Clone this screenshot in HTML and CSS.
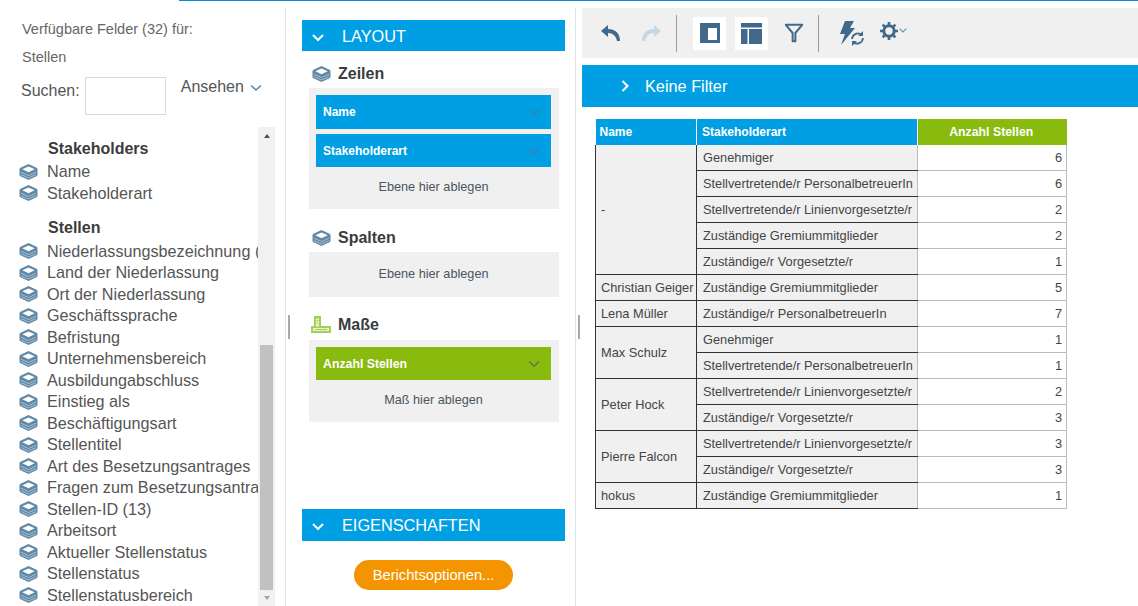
FILE: index.html
```html
<!DOCTYPE html>
<html lang="de">
<head>
<meta charset="utf-8">
<title>Bericht</title>
<link rel="stylesheet" href="styles.css">
</head>
<body>
<svg class="defs" width="0" height="0" aria-hidden="true">
  <symbol id="cube" viewBox="0 0 18 16">
    <path d="M9 .5 17.500 4.500v7L9 15.500.5 11.500v-7z" fill="#6088a7" stroke="#6088a7" stroke-linejoin="round"/>
    <path d="M9 2.400 15.200 5.300 9 8.200 2.800 5.300z" fill="#fff"/>
    <path d="M1.500 8.200 9 11.600l7.500-3.400M1.500 10.600 9 14l7.500-3.400" fill="none" stroke="#b9ccda" stroke-width=".8"/>
  </symbol>
</svg>
<div class="app">
  <aside class="fields">
    <div class="fields-head">
      <p class="caption">Verfügbare Felder (32) für:</p>
      <p class="caption second">Stellen</p>
      <div class="search">
        <label class="search-label" for="q">Suchen:</label>
        <input id="q" class="search-input" type="text">
        <span class="view">Ansehen
          <svg class="view-chev" viewBox="0 0 12 8" width="12" height="8"><path d="M1 1.500 6 6l5-4.500" fill="none" stroke="#5f88a8" stroke-width="1.600"/></svg>
        </span>
      </div>
    </div>
    <div class="tree-wrap">
      <div class="tree">
        <h3 class="group">Stakeholders</h3>
        <ul class="list list-first">
          <li><svg class="cube"><use href="#cube"/></svg>Name</li>
          <li><svg class="cube"><use href="#cube"/></svg>Stakeholderart</li>
        </ul>
        <h3 class="group second-group">Stellen</h3>
        <ul class="list list-second">
          <li><svg class="cube"><use href="#cube"/></svg>Niederlassungsbezeichnung (</li>
          <li><svg class="cube"><use href="#cube"/></svg>Land der Niederlassung</li>
          <li><svg class="cube"><use href="#cube"/></svg>Ort der Niederlassung</li>
          <li><svg class="cube"><use href="#cube"/></svg>Geschäftssprache</li>
          <li><svg class="cube"><use href="#cube"/></svg>Befristung</li>
          <li><svg class="cube"><use href="#cube"/></svg>Unternehmensbereich</li>
          <li><svg class="cube"><use href="#cube"/></svg>Ausbildungabschluss</li>
          <li><svg class="cube"><use href="#cube"/></svg>Einstieg als</li>
          <li><svg class="cube"><use href="#cube"/></svg>Beschäftigungsart</li>
          <li><svg class="cube"><use href="#cube"/></svg>Stellentitel</li>
          <li><svg class="cube"><use href="#cube"/></svg>Art des Besetzungsantrages</li>
          <li><svg class="cube"><use href="#cube"/></svg>Fragen zum Besetzungsantrag</li>
          <li><svg class="cube"><use href="#cube"/></svg>Stellen-ID (13)</li>
          <li><svg class="cube"><use href="#cube"/></svg>Arbeitsort</li>
          <li><svg class="cube"><use href="#cube"/></svg>Aktueller Stellenstatus</li>
          <li><svg class="cube"><use href="#cube"/></svg>Stellenstatus</li>
          <li><svg class="cube"><use href="#cube"/></svg>Stellenstatusbereich</li>
        </ul>
      </div>
      <div class="scrollbar">
        <span class="arrow-up"></span>
        <span class="track"><span class="thumb"></span></span>
        <span class="arrow-down"></span>
      </div>
    </div>
  </aside>

  <section class="layout">
    <div class="bar">
      <svg class="bar-chev" viewBox="0 0 14 9" width="14" height="9"><path d="M2 2l5 5 5-5" fill="none" stroke="#fff" stroke-width="2"/></svg>
      <span class="bar-title">LAYOUT</span>
    </div>
    <div class="drop-group">
      <h4 class="drop-title"><svg class="cube"><use href="#cube"/></svg>Zeilen</h4>
      <div class="drop">
        <div class="pill blue pill-first"><span>Name</span><svg class="pill-chev" viewBox="0 0 12 8" width="12" height="8"><path d="M1 1.500 6 6.200l5-4.700" fill="none" stroke="#3f7fa8" stroke-width="1.400"/></svg></div>
        <div class="pill blue"><span>Stakeholderart</span><svg class="pill-chev" viewBox="0 0 12 8" width="12" height="8"><path d="M1 1.500 6 6.200l5-4.700" fill="none" stroke="#3f7fa8" stroke-width="1.400"/></svg></div>
        <div class="hint">Ebene hier ablegen</div>
      </div>
    </div>
    <div class="drop-group columns">
      <h4 class="drop-title"><svg class="cube"><use href="#cube"/></svg>Spalten</h4>
      <div class="drop empty">
        <div class="hint">Ebene hier ablegen</div>
      </div>
    </div>
    <div class="drop-group measures">
      <h4 class="drop-title">
        <svg class="ruler" viewBox="0 0 20 18" width="20" height="18"><path d="M3 0h7v10h10v7H0v-7h3z" fill="#a5cf55"/><path d="M5 2.500h3v8H5zM2 12h16v3H2z" fill="#e6f2cf"/><path d="M5.500 4.500h2M5.500 7h2M4 13.500h12" stroke="#a5cf55" stroke-width="1" fill="none"/></svg>Maße</h4>
      <div class="drop">
        <div class="pill green pill-first"><span>Anzahl Stellen</span><svg class="pill-chev" viewBox="0 0 12 8" width="12" height="8"><path d="M1 1.500 6 6.200l5-4.700" fill="none" stroke="#5c7a55" stroke-width="1.400"/></svg></div>
        <div class="hint">Maß hier ablegen</div>
      </div>
    </div>
    <div class="bar props">
      <svg class="bar-chev" viewBox="0 0 14 9" width="14" height="9"><path d="M2 2l5 5 5-5" fill="none" stroke="#fff" stroke-width="2"/></svg>
      <span>EIGENSCHAFTEN</span>
    </div>
    <div class="btn-row"><button class="btn" type="button">Berichtsoptionen...</button></div>
    <span class="grip grip-left"></span>
  </section>

  <main class="report">
    <span class="grip grip-right"></span>
    <div class="toolbar">
      <svg class="tool undo" viewBox="0 0 24 20" width="24" height="20"><path d="M2 8l7-6v4c7 0 12 4 12 12h-3c-1-5-4-8-9-8v4z" fill="#41698c"/></svg>
      <svg class="tool redo" viewBox="0 0 24 20" width="24" height="20"><path d="M22 8l-7-6v4C8 6 3 10 3 18h3c1-5 4-8 9-8v4z" fill="#c3d8e6"/></svg>
      <span class="sep"></span>
      <span class="tile tile-a"><svg viewBox="0 0 20 20" width="20" height="20"><path fill-rule="evenodd" d="M0 0h20v20H0zM8 5v12h9V5z" fill="#41698c"/></svg></span>
      <span class="tile tile-b"><svg viewBox="0 0 21 21" width="21" height="21"><path d="M0 0h21v4.500H0zM0 6h6.500v15H0zM8 6h13v15H8z" fill="#41698c"/></svg></span>
      <svg class="tool filter" viewBox="0 0 22 22" width="20" height="20"><path d="M2 2h18l-7.500 9v9h-3v-9z" fill="none" stroke="#41698c" stroke-width="2.200" stroke-linejoin="round"/></svg>
      <span class="sep sep-b"></span>
      <svg class="tool flash" viewBox="0 0 28 26" width="28" height="26"><path d="M8 1h9l-4 7h5L4 25l4-11H3z" fill="#41698c"/><path d="M15 19a6 6 0 0 1 10-4M26 18a6 6 0 0 1-10 4" fill="none" stroke="#41698c" stroke-width="1.800"/><path d="M26 11v5h-5zM15 26v-5h5z" fill="#41698c"/></svg>
      <svg class="tool gear" viewBox="0 0 18 18" width="18" height="18"><circle cx="9" cy="9" r="5.200" fill="none" stroke="#41698c" stroke-width="3"/><path d="M9 0v3M9 15v3M0 9h3M15 9h3M2.600 2.600l2.100 2.100M13.300 13.300l2.100 2.100M2.600 15.400l2.100-2.100M13.300 4.700l2.100-2.100" stroke="#41698c" stroke-width="2.600"/></svg>
      <svg class="gear-chev" viewBox="0 0 8 5" width="8" height="5"><path d="M.7.7 4 4 7.300.7" fill="none" stroke="#6f93ad" stroke-width="1.200"/></svg>
    </div>
    <div class="filterbar">
      <svg class="filter-chev" viewBox="0 0 8 14" width="8" height="14"><path d="M1.500 2l5 5-5 5" fill="none" stroke="#fff" stroke-width="2"/></svg>
      <span class="filter-text">Keine Filter</span>
    </div>
    <table class="data">
      <colgroup><col class="c1"><col class="c2"><col class="c3"></colgroup>
      <thead>
        <tr><th>Name</th><th>Stakeholderart</th><th class="measure">Anzahl Stellen</th></tr>
      </thead>
      <tbody>
        <tr><td class="name" rowspan="5">-</td><td class="art">Genehmiger</td><td class="num">6</td></tr>
        <tr><td class="art">Stellvertretende/r PersonalbetreuerIn</td><td class="num">6</td></tr>
        <tr><td class="art">Stellvertretende/r Linienvorgesetzte/r</td><td class="num">2</td></tr>
        <tr><td class="art">Zuständige Gremiummitglieder</td><td class="num">2</td></tr>
        <tr><td class="art">Zuständige/r Vorgesetzte/r</td><td class="num">1</td></tr>
        <tr><td class="name">Christian Geiger</td><td class="art">Zuständige Gremiummitglieder</td><td class="num">5</td></tr>
        <tr><td class="name">Lena Müller</td><td class="art">Zuständige/r PersonalbetreuerIn</td><td class="num">7</td></tr>
        <tr><td class="name" rowspan="2">Max Schulz</td><td class="art">Genehmiger</td><td class="num">1</td></tr>
        <tr><td class="art">Stellvertretende/r PersonalbetreuerIn</td><td class="num">1</td></tr>
        <tr><td class="name" rowspan="2">Peter Hock</td><td class="art">Stellvertretende/r Linienvorgesetzte/r</td><td class="num">2</td></tr>
        <tr><td class="art">Zuständige/r Vorgesetzte/r</td><td class="num">3</td></tr>
        <tr><td class="name" rowspan="2">Pierre Falcon</td><td class="art">Stellvertretende/r Linienvorgesetzte/r</td><td class="num">3</td></tr>
        <tr><td class="art">Zuständige/r Vorgesetzte/r</td><td class="num">3</td></tr>
        <tr><td class="name">hokus</td><td class="art">Zuständige Gremiummitglieder</td><td class="num">1</td></tr>
      </tbody>
    </table>
  </main>
</div>
</body>
</html>
```
FILE: styles.css
```css
* { box-sizing: border-box; }
html, body { margin: 0; padding: 0; height: 606px; overflow: hidden; background: #fff; }
body { font-family: "Liberation Sans", Arial, sans-serif; color: #444; position: relative; }
body::before { content: ""; display: block; height: 1px; margin-left: 179px; background: #0a8fd0; }
.defs { position: absolute; }
.app { display: grid; grid-template-columns: 286px 290px 562px; height: 605px; }
.fields { border-right: 1px solid #dde5ec; margin-top: 7px; display: flex; flex-direction: column; overflow: hidden; }
.fields-head { padding: 12px 0 0 21px; }
.caption { margin: 0; font-size: 14.5px; line-height: 18px; color: #666; padding-left: 1px; }
.caption.second { margin-top: 10px; }
.search { display: flex; align-items: flex-start; margin-top: 11px; font-size: 16px; color: #555; height: 38px; }
.search-label { padding-top: 5px; line-height: 18px; }
.search-input { width: 81px; height: 38px; margin-left: 5px; border: 1px solid #d9d9d9; background: #fff; padding: 0; }
.view { margin-left: 15px; line-height: 18px; padding-top: 1px; display: flex; align-items: center; }
.view-chev { margin-left: 6px; margin-top: 2px; }
.tree-wrap { flex: 1; display: flex; margin-top: 12px; min-height: 0; }
.tree { width: 258px; overflow: hidden; padding-top: 13px; }
.group { margin: 0 0 0 48px; font-size: 16px; line-height: 18px; font-weight: bold; color: #3c3c3c; }
.second-group { margin-top: 15px; }
.list { list-style: none; margin: 0; padding: 0 0 0 19px; }
.list-first { margin-top: 3px; }
.list-second { margin-top: 3.5px; }
.list li { display: flex; align-items: center; height: 21.5px; font-size: 16.2px; color: #555; white-space: nowrap; }
.cube { width: 19px; height: 16px; margin-right: 9px; flex: none; }
.scrollbar { width: 17px; background: #f1f1f1; display: flex; flex-direction: column; align-items: center; height: 479px; }
.arrow-up { width: 0; height: 0; border: 3.5px solid transparent; border-top: 0; border-bottom: 4px solid #505050; margin-top: 7px; }
.track { flex: 1; width: 13px; display: flex; flex-direction: column; justify-content: flex-end; }
.thumb { display: block; height: 245px; margin-bottom: 6px; background: #c1c1c1; }
.arrow-down { width: 0; height: 0; border: 3.5px solid transparent; border-bottom: 0; border-top: 4px solid #a3a3a3; margin-bottom: 6px; }

.layout { padding: 12px 10px 0 16px; border-right: 1px solid #dde5ec; margin-top: 7px; position: relative; }
.bar { display: flex; align-items: center; height: 31px; width: 263px; background: #009fe3; color: #fff; font-size: 16.3px; }
.bar-title { padding-top: 2px; }
.bar-chev { margin-left: 9px; margin-right: 17px; margin-top: 3px; }
.drop-group { margin: 11px 0 0 7px; width: 250px; }
.columns { margin-top: 17px; }
.measures { margin-top: 16px; }
.drop-title { margin: 0; display: flex; align-items: center; height: 24px; font-size: 16px; font-weight: bold; color: #3c3c3c; padding-left: 3px; }
.drop-title .cube { margin-right: 7px; }
.ruler { margin-right: 7px; margin-left: -1px; }
.drop { margin-top: 2px; background: #f0f0f0; padding: 7px 8px 0 7px; height: 121px; }
.drop.empty { height: 45px; padding-top: 0; margin-top: 2px; }
.measures .drop { height: 82px; margin-top: 3px; }
.pill { height: 33px; margin-top: 5px; display: flex; align-items: center; justify-content: space-between; padding: 0 11px 0 7px; font-size: 12px; font-weight: bold; color: #fff; }
.pill-first { margin-top: 0; height: 34px; }
.blue { background: #009fe3; }
.green { background: #89ba0e; height: 33px; font-size: 12.3px; }
.hint { text-align: center; font-size: 12.7px; line-height: 14px; color: #4a5560; padding-top: 13px; }
.empty .hint { padding-top: 15px; }
.props { margin-top: 87px; height: 32px; }
.btn-row { display: flex; justify-content: center; width: 263px; margin-top: 19px; }
.btn { width: 159px; height: 30px; border: 0; border-radius: 15px; background: #f39400; color: #fff; font: 14.7px "Liberation Sans", Arial, sans-serif; padding: 0; }
.grip { position: absolute; width: 2px; height: 24px; background: #a9a9a9; }
.grip-left { left: 2px; top: 307px; }
.grip-right { left: 2px; top: 314px; }

.report { position: relative; padding: 7px 0 0 6px; }
.toolbar { display: flex; align-items: center; height: 50px; background: #f0f0f0; }
.tool { flex: none; }
.undo { margin-left: 17px; }
.redo { margin-left: 16px; }
.sep { width: 1px; height: 37px; background: #9a9a9a; margin-left: 13px; }
.tile { width: 33px; height: 33px; background: #fff; display: flex; align-items: center; justify-content: center; margin-left: 16px; }
.tile-b { margin-left: 9px; }
.filter { margin-left: 16px; }
.sep-b { margin-left: 14px; }
.flash { margin-left: 18px; }
.gear { margin-left: 15px; margin-top: -5px; }
.gear-chev { margin-left: 1px; margin-top: -5px; }
.filterbar { display: flex; align-items: center; height: 42px; margin-top: 7px; background: #009fe3; color: #fff; font-size: 16.3px; }
.filter-chev { margin-left: 39px; margin-right: 16px; }
.filter-text { padding-top: 1px; }
.data { border-collapse: collapse; table-layout: fixed; width: 471px; margin: 12px 0 0 13px; font-size: 12.8px; }
.c1 { width: 101px; } .c2 { width: 221px; } .c3 { width: 149px; }
.data th { height: 26px; background: #009fe3; color: #fff; text-align: left; padding: 0 4px; font-size: 12px; font-weight: bold; border-right: 1px solid #fff; }
.data th + th { padding-left: 5px; }
.data th.measure { background: #89ba0e; text-align: center; border-right: 0; font-size: 12.3px; padding: 0 5px 0 3px; }
.data td { height: 26px; padding: 0 4px 0 5px; white-space: nowrap; overflow: hidden; color: #444; }
.data tbody tr:first-child td { height: 25px; }
.data tbody tr:first-child td.name { height: 129px; }
.data td.art { padding-left: 6px; padding-right: 0; }
.name { background: #f0f0f0; border: 1px solid #333; border-top: 0; }
.art { background: #f0f0f0; border-bottom: 1px solid #333; border-right: 1px solid #bbb; }
.num { background: #fff; text-align: right; border-bottom: 1px solid #bbb; border-right: 1px solid #bbb; }
```
